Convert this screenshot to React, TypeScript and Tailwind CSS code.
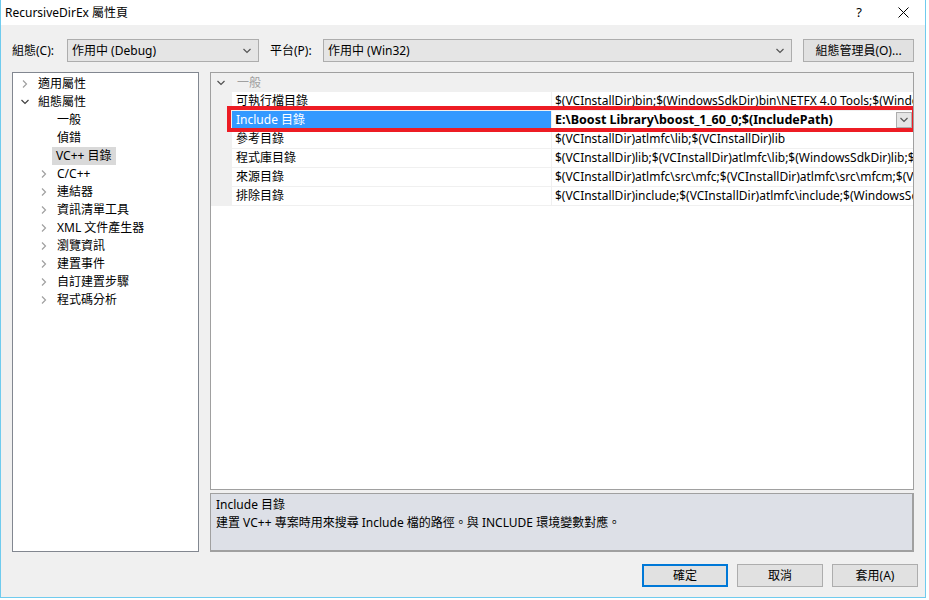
import React from "react";

const font = "font-['Segoe_UI','Noto_Sans','Noto_Sans_CJK_TC',sans-serif]";

const treeItems: { label: string; level: number; arrow?: "right" | "down"; selected?: boolean }[] = [
  { label: "適用屬性", level: 1, arrow: "right" },
  { label: "組態屬性", level: 1, arrow: "down" },
  { label: "一般", level: 2 },
  { label: "偵錯", level: 2 },
  { label: "VC++ 目錄", level: 2, selected: true },
  { label: "C/C++", level: 2, arrow: "right" },
  { label: "連結器", level: 2, arrow: "right" },
  { label: "資訊清單工具", level: 2, arrow: "right" },
  { label: "XML 文件產生器", level: 2, arrow: "right" },
  { label: "瀏覽資訊", level: 2, arrow: "right" },
  { label: "建置事件", level: 2, arrow: "right" },
  { label: "自訂建置步驟", level: 2, arrow: "right" },
  { label: "程式碼分析", level: 2, arrow: "right" },
];

const rows = [
  { name: "可執行檔目錄", value: "$(VCInstallDir)bin;$(WindowsSdkDir)bin\\NETFX 4.0 Tools;$(WindowsSdkDir)bin;$(VSInstallDir)Common7\\Tools\\bin" },
  { name: "Include 目錄", value: "E:\\Boost Library\\boost_1_60_0;$(IncludePath)", active: true },
  { name: "參考目錄", value: "$(VCInstallDir)atlmfc\\lib;$(VCInstallDir)lib" },
  { name: "程式庫目錄", value: "$(VCInstallDir)lib;$(VCInstallDir)atlmfc\\lib;$(WindowsSdkDir)lib;$(FrameworkSDKDir)\\lib" },
  { name: "來源目錄", value: "$(VCInstallDir)atlmfc\\src\\mfc;$(VCInstallDir)atlmfc\\src\\mfcm;$(VCInstallDir)atlmfc\\src\\atl" },
  { name: "排除目錄", value: "$(VCInstallDir)include;$(VCInstallDir)atlmfc\\include;$(WindowsSdkDir)include;$(FrameworkSDKDir)\\include" },
];

const Chevron = ({ dir, className }: { dir: "right" | "down"; className?: string }) => (
  <svg width="10" height="10" viewBox="0 0 10 10" className={className}>
    {dir === "right" ? (
      <path d="M3 1.5 L6.5 5 L3 8.5" fill="none" stroke="currentColor" strokeWidth="1.2" />
    ) : (
      <path d="M1.5 3 L5 6.5 L8.5 3" fill="none" stroke="currentColor" strokeWidth="1.2" />
    )}
  </svg>
);

const Select = ({ value, width }: { value: string; width: string }) => (
  <div className={`flex h-[23px] ${width} items-center justify-between border border-[#adadad] bg-[#e5e5e5] pl-[4px] pr-[6px]`}>
    <span className="text-[12px] text-black">{value}</span>
    <Chevron dir="down" className="text-[#555]" />
  </div>
);

const Button = ({ label, primary, width }: { label: string; primary?: boolean; width: string }) => (
  <div
    className={`flex h-[23px] ${width} items-center justify-center bg-[#e1e1e1] text-[12px] text-black ${
      primary ? "border-2 border-[#0078d7]" : "border border-[#adadad]"
    }`}
  >
    {label}
  </div>
);

export default function App() {
  return (
    <div className={`h-[600px] w-[929px] bg-white ${font}`}>
      <div className="flex h-[598px] w-[926px] flex-col border-x border-b border-[#6fcbee] bg-[#f0f0f0]">
        {/* title bar */}
        <div className="flex h-[25px] shrink-0 items-center justify-between bg-white pl-[4px] pr-[16px] text-[12px] text-black">
          <span>RecursiveDirEx 屬性頁</span>
          <div className="flex items-center gap-[36px]">
            <span className="text-[13px]">?</span>
            <svg width="11" height="11" viewBox="0 0 11 11">
              <path d="M0.5 0.5 L10.5 10.5 M10.5 0.5 L0.5 10.5" stroke="#000" strokeWidth="1" />
            </svg>
          </div>
        </div>

        {/* configuration bar */}
        <div className="mt-[14px] flex items-center text-[12px] text-black">
          <span className="w-[66px] pl-[11px]">組態(C):</span>
          <Select value="作用中 (Debug)" width="w-[192px]" />
          <span className="ml-[11px] w-[53px]">平台(P):</span>
          <Select value="作用中 (Win32)" width="w-[469px]" />
          <div className="ml-[11px]">
            <Button label="組態管理員(O)..." width="w-[111px]" />
          </div>
        </div>

        {/* main */}
        <div className="mt-[10px] flex pl-[11px]">
          {/* tree */}
          <div className="h-[480px] w-[187px] border border-[#828790] bg-white pt-[2px] text-[12px] text-black">
            {treeItems.map((item) => (
              <div
                key={item.label}
                className={`flex h-[18px] items-center ${item.level === 1 ? "pl-[7px]" : "pl-[26px]"}`}
              >
                <div className="flex w-[10px] justify-center">
                  {item.arrow && (
                    <Chevron dir={item.arrow} className={item.arrow === "down" ? "text-[#404040]" : "text-[#a0a0a0]"} />
                  )}
                </div>
                <span
                  className={`h-[18px] leading-[18px] ${item.selected ? "ml-[3px] bg-[#d9d9d9] px-[4px]" : "ml-[8px]"}`}
                >
                  {item.label}
                </span>
              </div>
            ))}
          </div>

          {/* right column */}
          <div className="ml-[11px] flex w-[704px] flex-col">
            <div className="relative h-[418px] overflow-hidden border border-[#a0a0a0] bg-white text-[12px] text-black">
              <div className="flex h-[19px] items-center bg-[#f0f0f0]">
                <div className="flex w-[20px] justify-center">
                  <Chevron dir="down" className="text-[#505050]" />
                </div>
                <span className="pl-[6px] text-[#a0a0a0]">一般</span>
              </div>
              {rows.map((row) => (
                <div key={row.name} className="flex h-[19px]">
                  <div className="w-[21px] shrink-0 bg-[#f0f0f0]" />
                  <div
                    className={`flex w-[319px] shrink-0 items-center border-b border-[#f0f0f0] pl-[4px] ${
                      row.active ? "bg-[#3399ff] text-white" : ""
                    }`}
                  >
                    {row.name}
                  </div>
                  <div className="w-[1px] shrink-0 bg-[#f0f0f0]" />
                  <div className="flex min-w-0 flex-1 items-center border-b border-[#f0f0f0] pl-[3px]">
                    <span className={`overflow-hidden whitespace-nowrap ${row.active ? "flex-1 text-[12.5px] font-bold" : ""}`}>
                      {row.value}
                    </span>
                    {row.active && (
                      <div className="mr-[1px] flex h-[16px] w-[16px] shrink-0 items-center justify-center border border-[#adadad] bg-[#e5e5e5]">
                        <Chevron dir="down" className="text-[#555]" />
                      </div>
                    )}
                  </div>
                </div>
              ))}
              {/* red annotation box */}
              <div className="absolute left-[16px] top-[33px] h-[26px] w-[689px] border-4 border-[#ed1c24]" />
            </div>

            <div className="mt-[3px] h-[59px] border border-[#a0a0a0] border-b-2 border-r-2 bg-[#dde0e7] px-[5px] pt-[2px] text-[12px] text-black">
              <div className="leading-[18px]">Include 目錄</div>
              <div className="leading-[18px]">建置 VC++ 專案時用來搜尋 Include 檔的路徑。與 INCLUDE 環境變數對應。</div>
            </div>
          </div>
        </div>

        {/* footer buttons */}
        <div className="mt-[12px] flex justify-end gap-[9px] pr-[7px]">
          <Button label="確定" primary width="w-[86px]" />
          <Button label="取消" width="w-[86px]" />
          <Button label="套用(A)" width="w-[86px]" />
        </div>
      </div>
    </div>
  );
}
